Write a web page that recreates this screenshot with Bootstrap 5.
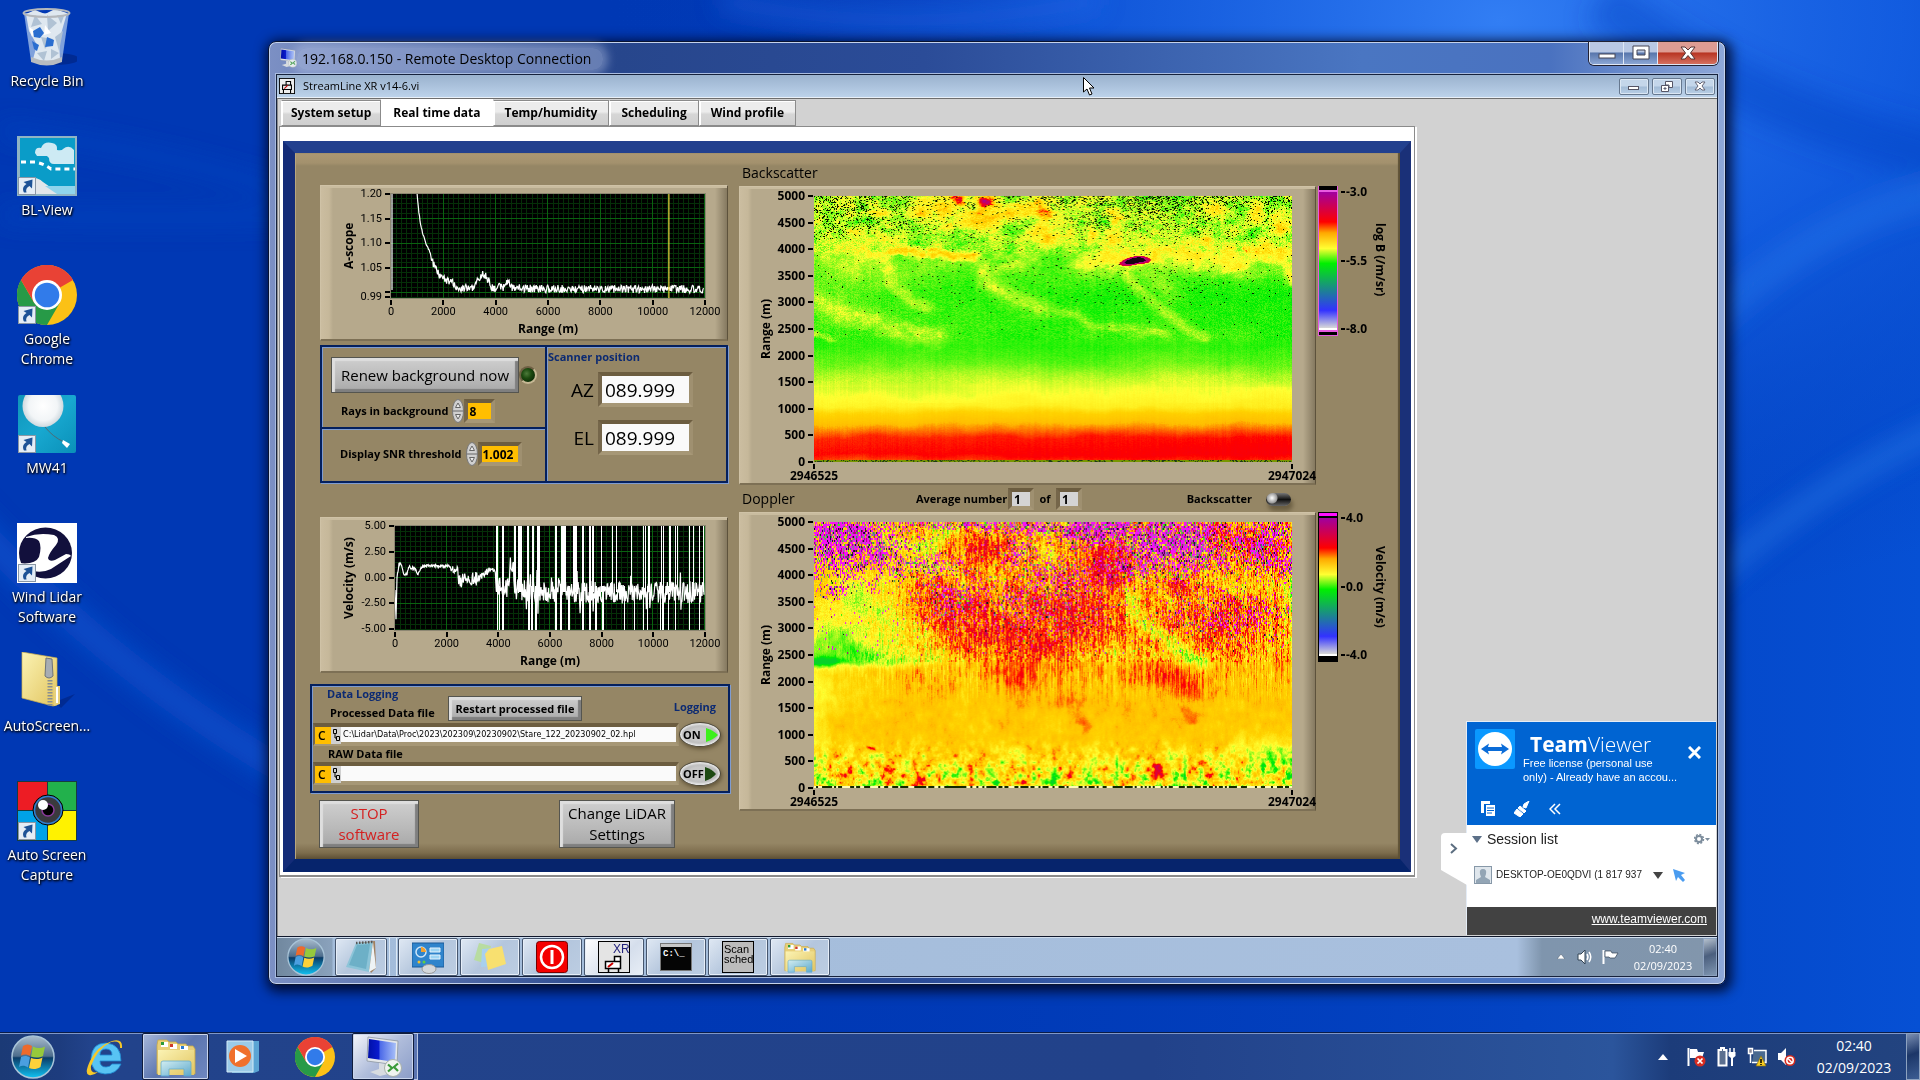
<!DOCTYPE html>
<html lang="en">
<head>
<meta charset="utf-8">
<meta name="viewport" content="width=device-width, initial-scale=1">
<title>192.168.0.150 - Remote Desktop Connection</title>
<link href="https://cdn.jsdelivr.net/npm/bootstrap@5.3.0/dist/css/bootstrap.min.css" rel="stylesheet">
<style>
  body { font-family: "Open Sans", "Noto Sans", sans-serif; font-size: 14px; line-height: 20px; color: #000; background: #0038b4; overflow: hidden; }
  svg { display: block; flex: none; }
  .desk { min-height: 0; }
  .wallpaper { position: absolute; inset: 0; width: 100%; height: 100vh; }

  /* desktop shortcuts */
  .shortcuts { position: relative; width: 94px; }
  .shortcut { height: 129px; padding-top: 7px; color: #fff; text-align: center; text-decoration: none; text-shadow: 1px 1px 2px #000, 0 1px 3px #000; white-space: nowrap; }
  .shortcut svg { margin: 0 auto 4px; }

  /* remote desktop window */
  .rdp { position: absolute; left: 268px; top: 41px; right: 194px; bottom: 47px; border: 1px solid #0a1430; border-radius: 8px; padding: 0 7px 7px;
    background: linear-gradient(90deg, #7c90c4 0, #27468c 24%, #2b4c98 45%, #4a76c2 75%, #4a72c0 88%, #8fa8d8 100%);
    box-shadow: inset 0 0 0 1px #c4d2ec, 2px 3px 12px 4px rgba(0,0,20,.75); }
  .rdp-title { height: 32px; padding-left: 3px; }
  .rdp-name { font-size: 14px; padding: 0 12px 0 5px; margin: 1px 0 0; font-weight: 400; line-height: 22px; border-radius: 10px; background: rgba(190,203,232,.4); box-shadow: 0 0 8px 5px rgba(190,203,232,.4); }
  .rdp-body { border: 1px solid #16223c; outline: 1px solid #a9bce0; background: #d2d2d2; min-height: 0; }
  .caption-btns { align-self: flex-start; border: 1px solid #dfe7f5; border-top: 0; border-radius: 0 0 5px 5px; overflow: hidden; height: 23px; box-shadow: 0 0 0 1px #223; }
  .caption-btns button { border: 0; border-right: 1px solid #dfe7f5; padding: 0; width: 34px; background: linear-gradient(#b9c8e4 0 45%, #5876ac 50%, #8ba6d4); }
  .caption-btns .btn-x { width: 59px; border-right: 0; background: linear-gradient(#dd9c93 0 45%, #b83422 50%, #d4705f); }
  .caption-btns svg, .mdi-btns svg { margin: auto; }

  .mdi-title { height: 23px; padding-left: 2px; background: linear-gradient(#9ab2ce, #bcd2ea); border-bottom: 1px solid #e9f0f8; font-size: 11px; }
  .mdi-btns { gap: 3px; padding-right: 2px; }
  .mdi-btns button { width: 30px; height: 17px; padding: 0; border: 1px solid #66788f; border-radius: 2px; background: linear-gradient(#c4d6ea 0 48%, #a2bbd6 52%, #b9cfe6); box-shadow: inset 0 0 0 1px #dbe7f4; }
  .mdi-area { border-top: 1px solid #6e6e6e; border-left: 1px solid #8c8c8c; padding: 0 0 0 1px; min-height: 0; }

  /* front panel tabs */
  .vi { margin-right: 302px; }
  .vi-tabs { border: 0; height: 27px; padding-left: 2px; flex-wrap: nowrap; align-items: flex-end; }
  .vi-tabs .nav-link { height: 26px; margin: 0; padding: 0 11px; border: 1px solid #8b8b8b; border-left-color: #fff; border-radius: 0; background: linear-gradient(#ececec 0 45%, #d6d6d6 55%, #cfcfcf); box-shadow: inset 1px 1px 0 #fff; color: #000; font-size: 12px; font-weight: 700; line-height: 24px; }
  .vi-tabs .tab-first { padding: 0 9px; }
  .vi-tabs .nav-link.active { height: 27px; background: #fff; border-color: #fff; line-height: 20px; }
  .vi-page { background: #fff; border: 1px solid #8b8b8b; border-bottom-width: 2px; padding: 14px 3px 3px 3px; box-shadow: 2px 1px 0 #fff; }
  .vi-blue { border-style: solid; border-width: 12px 11px 13px 12px; border-color: #22408e #1a3078 #06246c #142c78; background: #958665; }
  .vi-brown { height: 706px; padding: 0 0 0 15px; background: linear-gradient(#ab9873 0, #a3916d 10px, #958665 13px, #958665 690px, #7c6c4c 700px, #5c4e34 706px); box-shadow: inset -2px 0 1px #5e5136, inset 1px 0 0 #b8a67e; }
  .col-controls { width: 420px; flex: none; padding-top: 32px; }
  .col-maps { padding: 10px 0 0 9px; min-width: 0; }

  /* raised panels and text */
  .raised { background: linear-gradient(90deg, #cbbda0 0, #c6b89a 8px, #b6a98c 12px, #b6a98c calc(100% - 12px), #857960 100%); border: 1px solid #cfc2a6; border-right-color: #5d523c; border-bottom: 2px solid #7d7055; box-shadow: inset 0 2px 0 #c9bc9f; }
  .bold12 { font-size: 12px; line-height: 14px; font-weight: 700; white-space: nowrap; }
  .bold11 { font-size: 11px; line-height: 14px; font-weight: 700; white-space: nowrap; }
  .navy { color: #0c2a72; }
  .thin15 { font-size: 15px; line-height: 21px; }
  .head15 { font-size: 14px; line-height: 20px; }
  .steel { border: 1px solid #55554f; border-radius: 0; padding: 0; background: linear-gradient(#cfcfcf, #b9b9b9 60%, #a8a8a8); box-shadow: inset 3px 3px 1px #dedede, inset -3px -3px 1px #7f7f7f; color: #000; }
  .sunk { border-style: solid; border-width: 4px; border-color: #6c5d40 #9f9070 #a69776 #75664a; border-radius: 0; background: #fafafa; padding: 0; color: #000; }
  .gold { background: #ffbe00; font-size: 12px; font-weight: 700; line-height: 16px; height: 24px; padding-left: 1px; }
  .framed { border: 2px solid #04205e; box-shadow: inset 1px 1px 0 #7f9cd0, 1px 1px 0 #7f9cd0; }

  /* charts */
  .chart-sm { margin-left: 10px; width: 408px; height: 156px; padding: 8px 22px 0 20px; }
  .chart-map { height: 299px; padding: 9px 23px 0 18px; min-width: 0; }
  .v-up { writing-mode: vertical-rl; transform: rotate(180deg); text-align: center; width: 16px; line-height: 16px; }
  .v-down { writing-mode: vertical-rl; width: 16px; line-height: 16px; }
  .axis-y > span { display: flex; align-items: center; justify-content: flex-end; height: 0; }
  .axis-y > span::after { content: ""; width: 5px; height: 2px; margin: 0 1px 0 3px; background: #000; }
  .axis-y > i { flex: 1 1 0; }
  .axis-x { height: 20px; padding-top: 2px; }
  .axis-x > span { width: 0; display: flex; flex-direction: column; align-items: center; white-space: nowrap; line-height: 13px; }
  .axis-x > span::before { content: ""; width: 2px; height: 5px; background: #000; }
  .ax11 { font-family: Roboto, sans-serif; font-size: 11px; }
  .plot-sm { height: 104px; width: 100%; background: #000; outline: 1px solid #8d8672; }
  .plot-map { height: 266px; width: 100%; display: block; }
  .scale-bar { width: 20px; height: 150px; margin-left: 2px; }
  .scale-marks > span { line-height: 0; height: 0; display: flex; align-items: center; white-space: nowrap; }
  .scale-marks > span::before { content: ""; width: 4px; height: 2px; background: #000; margin-right: 1px; }
  .side { width: 84px; flex: none; }

  .led { width: 18px; height: 18px; border-radius: 50%; background: radial-gradient(circle at 40% 40%, #4c7a3a, #1c4a10 40%, #0f3008 70%); border: 2px solid #6e6044; border-right-color: #c6b894; border-bottom-color: #c6b894; }
  .oval { width: 42px; height: 25px; padding: 0 0 0 3px; border: 1px solid #4e4838; border-radius: 50%; background: radial-gradient(#c8c8c8 40%, #8e8e8e); box-shadow: inset 0 0 2px 2px #e6e6e6, 1px 2px 4px #5f5237; font-size: 11px; font-weight: 700; line-height: 20px; margin-right: 7px; }
  .pathbox { height: 23px; border-color: #6c5d40 #9f9070 #a69776 #75664a; border-style: solid; border-width: 4px 3px; background: #fafafa; }
  .pathbox input { border: 0; background: transparent; padding: 0 0 0 2px; font: 9px/15px "DejaVu Sans Condensed", "DejaVu Sans", sans-serif; color: #000; min-width: 0; }
  .drive { width: 16px; height: 17px; margin-left: -1px; background: #ffbe00; font-size: 12px; font-weight: 600; line-height: 17px; padding-left: 3px; }
  .browse { width: 10px; height: 17px; background: #d0d0d0; }
  .knob { appearance: none; width: 25px; height: 13px; margin: 0; border-radius: 7px; background: radial-gradient(circle at 6px 5px, #fff, #999 5px, transparent 6px), linear-gradient(#777, #111 50%, #666); box-shadow: 2px 5px 4px #6b5e42; }

  /* session widget */
  .tv { position: absolute; right: 9px; bottom: 49px; width: 250px; height: 214px; font-family: "Liberation Sans", Arial, sans-serif; color: #222; border-top: 1px solid #e4ecf6; border-left: 1px solid #e4ecf6; background: #fff; }
  .tv-head { height: 103px; background: #0064d2; color: #fff; }
  .tv-name { font: 300 21px/24px "Open Sans", sans-serif; }
  .tv-name b { font-weight: 700; }
  .tv-note { font-size: 11px; line-height: 14px; }
  .tv-foot { height: 28px; background: #424242; font-size: 12px; }
  .tv-handle { position: absolute; left: -26px; top: 111px; }

  /* taskbars */
  .bar-in { height: 40px; background: linear-gradient(90deg, #71889f 0, #8aa2bc 55px, #a3bcda 56px, #a9c0de calc(100% - 200px), #7f95ad calc(100% - 175px), #8296ac 100%); border-top: 1px solid #10182c; box-shadow: inset 0 1px 0 #d0deee; }
  .tile { border: 1px solid #46566e; border-radius: 2px; padding: 0; background: linear-gradient(135deg, #dfe8f3, #b4c6dd 50%, #bccde2); box-shadow: inset 0 0 0 1px #e6eef8; }
  .bar-in .tile { width: 60px; height: 38px; margin-right: 2px; }
  .bar-in .tile svg, .bar-out .tile svg, .bare svg { margin: auto; }
  .tile.lit { background: linear-gradient(135deg, #fff, #d5deec 60%, #e8eef6); }
  .bar-out { position: relative; height: 48px; color: #fff; background: linear-gradient(90deg, #1b3a76 0, #1d3c7e 60px, #22438b 90px, #22428a 60%, #2b559c 84%, #1c3c7a 87%, #234480 100%); border-top: 1px solid #0a1c48; box-shadow: inset 0 1px 0 #7f97c8; }
  .bar-out .tile { width: 67px; height: 47px; border-color: #101c3c; background: linear-gradient(135deg, #a8b8da, #5c76b0 50%, #6f88c0); box-shadow: inset 0 0 0 1px #c9d5ec; }
  .bar-out .tile.lit { width: 62px; background: linear-gradient(135deg, #f4f6fb, #b0bddb 50%, #8a9cc8); }
  .bare { border: 0; padding: 0; background: none; }
  .clock-in { font-size: 11px; line-height: 17px; color: #fff; text-align: center; }
  .clock-out { font-size: 14px; line-height: 22px; text-align: center; padding-left: 5px; }
  .peek { width: 14px; border: 1px solid #8da2c0; background: linear-gradient(160deg, rgba(255,255,255,.4), rgba(20,40,80,.5) 45%, rgba(120,150,190,.3)); }
  .pointer { position: absolute; left: 1083px; top: 77px; }
</style>
<script src="https://cdn.jsdelivr.net/npm/bootstrap@5.3.0/dist/js/bootstrap.bundle.min.js"></script>
</head>
<body class="d-flex flex-column vh-100">

<!-- shared icon shapes -->
<svg width="0" height="0" class="position-absolute" aria-hidden="true">
  <defs>
    <linearGradient id="gFold" x1="0" y1="0" x2="1" y2="1"><stop offset="0" stop-color="#fbf3b4"/><stop offset="1" stop-color="#e2c560"/></linearGradient>
    <linearGradient id="gMon" x1="0" y1="0" x2="1" y2="0"><stop offset="0" stop-color="#0010a8"/><stop offset=".4" stop-color="#0a1cd0"/><stop offset=".42" stop-color="#4a68e8"/><stop offset="1" stop-color="#a8c0f8"/></linearGradient>
    <linearGradient id="gOrb" x1="0" y1="0" x2="0" y2="1"><stop offset="0" stop-color="#a9bccd"/><stop offset=".48" stop-color="#4d6d8c"/><stop offset=".52" stop-color="#0b3c68"/><stop offset="1" stop-color="#10c4f4"/></linearGradient>
    <radialGradient id="gBall"><stop offset="0" stop-color="#fff"/><stop offset=".7" stop-color="#f2f5f7"/><stop offset="1" stop-color="#cfd9df"/></radialGradient>
    <linearGradient id="gSky" x1="0" y1="0" x2="1" y2="1"><stop offset="0" stop-color="#0f94b8"/><stop offset=".5" stop-color="#18a8d0"/><stop offset="1" stop-color="#0a90b8"/></linearGradient>
    <linearGradient id="gGlass" x1="0" y1="0" x2="1" y2="1"><stop offset="0" stop-color="#cfeefa"/><stop offset="1" stop-color="#4ea6d8"/></linearGradient>
  </defs>
  <symbol id="i-arrow" viewBox="0 0 18 18"><rect x=".5" y=".5" width="17" height="17" fill="#e4edf6" stroke="#8a97a5"/><path d="M6 15.500C4.500 12.500 4.500 9.500 8.500 7L5.500 5 14.500 2.500 14 11.500 11.500 9C8.500 10.500 7.500 12.500 8.500 15.500Z" fill="#1d5296"/></symbol>
  <symbol id="i-chrome" viewBox="0 0 60 60"><circle cx="30" cy="30" r="30" fill="#fbc116"/><path d="M30 30 4 15A30 30 0 0 1 56 15Z" fill="#e94235"/><path d="M4 15A30 30 0 0 0 30 60L43 37.500H17Z" fill="#279a47"/><path d="M4 15 17 37.500 30 30 30 15Z" fill="#e94235"/><circle cx="30" cy="30" r="15" fill="#fff"/><circle cx="30" cy="30" r="12.300" fill="#317bea"/></symbol>
  <symbol id="i-orb" viewBox="0 0 44 44"><circle cx="22" cy="22" r="21" fill="url(#gOrb)" stroke="#a8c4d8" stroke-width="1.500"/><path d="M12 11c3-2 6-2 9 0l-2 10c-3-2-6-2-9-.5Z" fill="#ee6a2c"/><path d="M22 11.500c4 2 8 2 12 0l-2 9.500c-4 2-8 2-12 .5Z" fill="#96c93c"/><path d="M10 22c3-1.500 6-1.500 9 .5l-2 10c-3-2-6-2.500-9-.5Z" fill="#4a9fe0"/><path d="M20 23c4 1.500 8 1.500 11.500-.5l-2 9.500c-4 2.500-8 2.500-11.500 1Z" fill="#fdd13a"/></symbol>
  <symbol id="i-explorer" viewBox="0 0 40 40"><path d="M1 8 2 3H11L13 5H20L22 7H30L31 9H37L39 12V37H1Z" fill="#e8cf78" stroke="#c8a948" stroke-width=".8"/><path d="M5 5h7v5H5zM14 7h7v5h-7zM24 9h8v5h-8z" fill="#fff"/><path d="M5 5h3v3H5z" fill="#2a9a3a"/><path d="M14 7h3v3h-3z" fill="#d03a2a"/><path d="M25 9h3v3h-3z" fill="#2a7ad0"/><path d="M2 13H38V38H2Z" fill="url(#gFold)"/><path d="M5 26Q5 24 7 24H33Q35 24 35 26V39H28V32H13V39H5Z" fill="url(#gGlass)" stroke="#5aa8d0" stroke-width=".8" opacity=".9"/></symbol>
  <symbol id="i-monitor" viewBox="0 0 38 42"><path d="M4 1 34 5 33 29 3 25Z" fill="#e4e7ea" stroke="#8c95a0" stroke-width=".8"/><path d="M5 3 32 7 31 26 4 22Z" fill="url(#gMon)"/><path d="M15 27 21 28V33L28 37 16 40 6 36 15 33Z" fill="#d8dce0"/><circle cx="29" cy="32" r="8.500" fill="#f0f3f0" stroke="#a8b0a8"/><path d="M24 28.500 28 32 24 35.500M34 27.500 30 31 34 35" fill="none" stroke="#3a9a38" stroke-width="2.200"/></symbol>
  <symbol id="i-cannon" viewBox="0 0 18 18"><rect x=".5" y=".5" width="17" height="17" fill="#eee" stroke="#000"/><path d="M4 8H14V13H4ZM8 4H13V8H8ZM5 13V17M13 13V17" fill="none" stroke="#000" stroke-width="1.200"/><path d="M6 12 10 8" stroke="#b00" stroke-width="1.200"/></symbol>
</svg>

<main class="desk flex-grow-1 position-relative">
  <svg class="wallpaper" viewBox="0 0 1920 1080" preserveAspectRatio="none" aria-hidden="true">
    <defs>
      <radialGradient id="wTop" gradientUnits="userSpaceOnUse" cx="0" cy="0" r="1" gradientTransform="translate(1500 20) scale(900 600)"><stop offset="0" stop-color="#327ef4"/><stop offset=".45" stop-color="#1660e4" stop-opacity=".75"/><stop offset="1" stop-color="#0038b4" stop-opacity="0"/></radialGradient>
      <linearGradient id="wRight" x1="0" x2="1" y1="0" y2="0"><stop offset=".3" stop-color="#0038b4" stop-opacity="0"/><stop offset="1" stop-color="#0650d4"/></linearGradient>
      <filter id="soft"><feGaussianBlur stdDeviation="12"/></filter>
    </defs>
    <rect width="1920" height="1080" fill="#0038b4"/>
    <rect width="1920" height="1080" fill="url(#wRight)"/>
    <rect width="1920" height="1080" fill="url(#wTop)"/>
    <g fill="none" filter="url(#soft)">
      <path d="M-40 510Q120 680 300 780" stroke="#0a54d0" stroke-width="28" opacity=".7"/>
      <path d="M0 130Q160 150 300 195M0 215Q150 220 300 215" stroke="#0848c4" stroke-width="12" opacity=".6"/>
      <path d="M720 0Q900 40 1100 0" stroke="#2c74f0" stroke-width="18" opacity=".4"/>
      <path d="M1700 590Q1820 480 1960 420" stroke="#3f93f4" stroke-width="18" opacity=".4"/>
      <path d="M1600 0Q1760 120 1960 160" stroke="#0040c0" stroke-width="50" opacity=".4"/>
      <path d="M1690 340Q1820 210 1960 190" stroke="#3c8af6" stroke-width="30" opacity=".3"/>
    </g>
  </svg>

  <nav class="shortcuts d-flex flex-column" aria-label="Desktop">
    <a href="#" class="shortcut"><svg width="60" height="60" viewBox="0 0 60 60"><ellipse cx="38" cy="52" rx="24" ry="6" fill="#001c70" opacity=".5"/><path d="M7 6 14 54Q30 60 45 54L52 6Z" fill="#a9c4ea" opacity=".75"/><path d="M9 7 18 3 28 7 38 2 50 6 46 20 42 34 43 52Q30 57 16 52L20 38 12 24Z" fill="#dfe8f0"/><path d="M18 8 25 17 14 20ZM30 8 40 16 31 24ZM24 30 36 32 28 42ZM38 30 46 24 42 44ZM20 46 30 44 27 54ZM40 8 47 9 44 17ZM34 42 42 46 34 52Z" fill="#b0c2d4"/><path d="M12 20 18 24 15 30ZM28 18 34 26 27 28Z" fill="#fff"/><path d="M16 24 23 20 27 26 23 31 17 30ZM30 30 37 33 36 39 28 40ZM15 34 22 38 20 44 17 42Z" fill="#2a6ed0"/><path d="M14 50Q30 57 45 50V55Q30 62 14 55Z" fill="#b8bcc0"/><ellipse cx="29.500" cy="6" rx="23" ry="4" fill="none" stroke="#b4b8bc" stroke-width="2"/></svg>Recycle Bin</a>
    <a href="#" class="shortcut"><svg width="60" height="60" viewBox="0 0 60 60"><rect width="60" height="60" fill="#8fb4c4"/><rect x="3" y="2" width="55" height="56" fill="#0a9cc8"/><path d="M18 17Q18 11 24 12 27 5 35 7 41 8 40 14 45 15 46 13 52 8 57 14V28H37Q32 28 32 22L30 20H20Z" fill="#cdeaf4"/><path d="M4 26H18Q28 28 34 33H58" fill="none" stroke="#fff" stroke-width="3" stroke-dasharray="5 4"/><path d="M3 44Q18 38 26 46L36 53 58 58H3Z" fill="#e2e6ea"/><path d="M28 50H58V58H40Z" fill="#8fd4ec"/><use href="#i-arrow" x="1" y="41" width="18" height="18"/></svg>BL-View</a>
    <a href="#" class="shortcut"><svg width="60" height="60" viewBox="0 0 60 60"><use href="#i-chrome" width="60" height="60"/><use href="#i-arrow" x="1" y="41" width="18" height="18"/></svg>Google<br>Chrome</a>
    <a href="#" class="shortcut"><svg width="60" height="60" viewBox="0 0 60 60"><rect x="1" y="1" width="58" height="58" rx="2" fill="url(#gSky)"/><clipPath id="cBal"><rect x="1" y="1" width="58" height="58"/></clipPath><ellipse cx="26" cy="12" rx="20.500" ry="21" fill="url(#gBall)" clip-path="url(#cBal)"/><path d="M28 33Q36 43 47 48" fill="none" stroke="#4c6c78"/><path d="M46 46 53 50 50 54 45 49Z" fill="#fff"/><use href="#i-arrow" x="1" y="41" width="18" height="18"/></svg>MW41</a>
    <a href="#" class="shortcut"><svg width="60" height="60" viewBox="0 0 60 60"><rect width="60" height="60" fill="#fff"/><ellipse cx="28.500" cy="30" rx="26.500" ry="25.500" fill="#12103c"/><path d="M9 14Q22 9 37 12 44 15 39 22 32 30 31 35 32 39 38 37L49 31Q53 31 54 33 40 42 34 46 24 51 12 47L2 40Q18 42 22 34 25 24 22 18 18 14 9 15Z" fill="#fff"/><use href="#i-arrow" x="1" y="41" width="18" height="18"/></svg>Wind Lidar<br>Software</a>
    <a href="#" class="shortcut"><svg width="60" height="60" viewBox="0 0 60 60"><path d="M38 50 58 42 44 56Z" fill="#001c70" opacity=".5"/><path d="M5 0 40 6V53L36 54 5 46Z" fill="url(#gFold)" stroke="#d0b24c" stroke-width=".7"/><path d="M37 34 43 34V52L37 54Z" fill="#e6d07c"/><path d="M40 35V51" stroke="#fff" stroke-width="2"/><path d="M33 28V54" stroke="#8a8f90" stroke-width="5" stroke-dasharray="1.500 1.500"/><path d="M29 6 35 7 36 24Q32 28 28 24Z" fill="#a7adb3" stroke="#6d747a"/></svg>AutoScreen...</a>
    <a href="#" class="shortcut"><svg width="60" height="60" viewBox="0 0 60 60"><rect width="60" height="60" fill="#173c40"/><path d="M1 1h29v28H1z" fill="#ed1c24"/><path d="M31 1h28v28H31z" fill="#22b14c"/><path d="M1 30h29v29H1z" fill="#00a2e8"/><path d="M31 30h28v29H31z" fill="#fff200"/><circle cx="31" cy="29" r="15" fill="#3a3a3e" stroke="#000"/><circle cx="31" cy="29" r="13.500" fill="none" stroke="#2f7fd0" stroke-width="1.500"/><circle cx="31" cy="29" r="6" fill="#000" stroke="#8a3a9a" stroke-width="1.500"/><circle cx="26" cy="24" r="5" fill="#fff"/><use href="#i-arrow" x="1" y="41" width="18" height="18"/></svg>Auto Screen<br>Capture</a>
  </nav>

  <section class="rdp d-flex flex-column" aria-label="Remote Desktop Connection">
    <header class="rdp-title d-flex align-items-center">
      <svg width="18" height="20"><use href="#i-monitor" width="18" height="20"/></svg>
      <h1 class="rdp-name">192.168.0.150 - Remote Desktop Connection</h1>
      <div class="caption-btns d-flex ms-auto">
        <button type="button" aria-label="Minimise"><svg width="18" height="16"><rect x="1" y="9" width="16" height="4" fill="#fff" stroke="#445"/></svg></button>
        <button type="button" aria-label="Maximise"><svg width="18" height="16"><path d="M1 1H17V14H1ZM5 5V10H13V5Z" fill="#fff" fill-rule="evenodd" stroke="#445"/></svg></button>
        <button type="button" class="btn-x" aria-label="Close"><svg width="16" height="14"><path d="M1 1H5L8 4 11 1H15L10.500 7 15 13H11L8 9.500 5 13H1L5.500 7Z" fill="#fff" stroke="#533"/></svg></button>
      </div>
    </header>
    <div class="rdp-body flex-grow-1 d-flex flex-column">
      <div class="mdi-title d-flex align-items-center">
        <svg width="16" height="16"><use href="#i-cannon" width="16" height="16"/></svg>
        <span class="ms-2">StreamLine XR v14-6.vi</span>
        <div class="mdi-btns ms-auto d-flex">
          <button type="button" aria-label="Minimise window"><svg width="12" height="9"><rect x=".5" y="4.500" width="10" height="3" fill="#fff" stroke="#556"/></svg></button>
          <button type="button" aria-label="Restore window"><svg width="12" height="11"><path d="M4.500.5H11.500V6.500H8V4H4.500Z" fill="#fff" stroke="#556"/><path d="M.5 4.500H7.500V10.500H.5ZM3 7V8H5V7Z" fill="#fff" stroke="#556"/></svg></button>
          <button type="button" aria-label="Close window"><svg width="12" height="10"><path d="M1 1H4L6 3 8 1H11L8 5 11 9H8L6 7 4 9H1L4 5Z" fill="#fff" stroke="#667"/></svg></button>
        </div>
      </div>

      <div class="mdi-area flex-grow-1">
        <div class="vi">
          <ul class="nav nav-tabs vi-tabs" role="tablist">
            <li class="nav-item"><button class="nav-link tab-first" type="button" role="tab">System setup</button></li>
            <li class="nav-item"><button class="nav-link active" type="button" role="tab" aria-selected="true">Real time data</button></li>
            <li class="nav-item"><button class="nav-link" type="button" role="tab">Temp/humidity</button></li>
            <li class="nav-item"><button class="nav-link" type="button" role="tab">Scheduling</button></li>
            <li class="nav-item"><button class="nav-link" type="button" role="tab">Wind profile</button></li>
          </ul>
          <div class="vi-page"><div class="vi-blue"><div class="vi-brown d-flex">

            <div class="col-controls">
              <div class="raised chart-sm d-flex">
                <div class="v-up bold12" style="height:104px">A-scope</div>
                <div class="axis-y ax11 d-flex flex-column" style="width:34px;height:103px">
                  <span>1.20</span><i style="flex-grow:5"></i><span>1.15</span><i style="flex-grow:5"></i><span>1.10</span><i style="flex-grow:5"></i><span>1.05</span><i style="flex-grow:5"></i><span></span><i style="flex-grow:1"></i><span>0.99</span>
                </div>
                <div class="flex-grow-1">
                  <svg id="ascope" class="plot-sm" viewBox="0 0 313 104" preserveAspectRatio="none" role="img" aria-label="A-scope trace"></svg>
                  <div class="axis-x ax11 d-flex justify-content-between"><span>0</span><span>2000</span><span>4000</span><span>6000</span><span>8000</span><span>10000</span><span>12000</span></div>
                  <div class="bold12 text-center mt-1">Range (m)</div>
                </div>
              </div>

              <div class="framed d-flex" style="margin:4px 0 0 10px;height:138px;width:408px">
                <div class="d-flex flex-column" style="width:223px">
                  <div style="height:82px;border-bottom:2px solid #04205e;box-shadow:0 1px 0 #7f9cd0;padding:10px 0 0 9px">
                    <div class="d-flex align-items-center">
                      <button type="button" class="steel thin15" style="width:188px;height:36px">Renew background now</button>
                      <div class="led"></div>
                    </div>
                    <div class="d-flex align-items-center bold11" style="padding:6px 0 0 10px">
                      <label for="rays">Rays in background</label>
                      <svg class="ms-1" width="12" height="24" viewBox="0 0 12 24"><ellipse cx="6" cy="12" rx="5.500" ry="11.500" fill="#d0d0d0" stroke="#777"/><path d="M1 12H11M3.500 8.500 6 4 8.500 8.500ZM3.500 15.500 6 20 8.500 15.500Z" fill="#eee" stroke="#666"/></svg>
                      <input id="rays" class="sunk gold" style="width:31px" value="8">
                    </div>
                  </div>
                  <div class="d-flex align-items-center bold11" style="padding:13px 0 0 18px">
                    <label for="snr">Display SNR threshold</label>
                    <svg class="ms-1" width="12" height="24" viewBox="0 0 12 24"><ellipse cx="6" cy="12" rx="5.500" ry="11.500" fill="#d0d0d0" stroke="#777"/><path d="M1 12H11M3.500 8.500 6 4 8.500 8.500ZM3.500 15.500 6 20 8.500 15.500Z" fill="#eee" stroke="#666"/></svg>
                    <input id="snr" class="sunk gold" style="width:44px" value="1.002">
                  </div>
                </div>
                <div class="flex-grow-1" style="border-left:2px solid #04205e;box-shadow:inset 1px 0 0 #7f9cd0">
                  <div class="bold11 navy" style="padding:3px 0 0 1px">Scanner position</div>
                  <div class="d-flex align-items-center" style="font-size:19px;margin-top:8px"><label for="az" class="text-end" style="width:47px">AZ</label><input id="az" class="sunk ms-1" style="width:95px;height:35px;padding-left:3px" value="089.999"></div>
                  <div class="d-flex align-items-center" style="font-size:19px;margin-top:13px"><label for="el" class="text-end" style="width:47px">EL</label><input id="el" class="sunk ms-1" style="width:95px;height:35px;padding-left:3px" value="089.999"></div>
                </div>
              </div>

              <div class="raised chart-sm d-flex" style="margin-top:34px">
                <div class="v-up bold12" style="height:104px">Velocity (m/s)</div>
                <div class="axis-y ax11 d-flex flex-column" style="width:38px;height:103px">
                  <span>5.00</span><i></i><span>2.50</span><i></i><span>0.00</span><i></i><span>-2.50</span><i></i><span>-5.00</span>
                </div>
                <div class="flex-grow-1">
                  <svg id="velo" class="plot-sm" viewBox="0 0 309 104" preserveAspectRatio="none" role="img" aria-label="Velocity trace"></svg>
                  <div class="axis-x ax11 d-flex justify-content-between"><span>0</span><span>2000</span><span>4000</span><span>6000</span><span>8000</span><span>10000</span><span>12000</span></div>
                  <div class="bold12 text-center mt-1">Range (m)</div>
                </div>
              </div>

              <div class="framed" style="margin-top:11px;height:109px;padding-left:1px">
                <div class="d-flex bold11" style="height:36px">
                  <div style="width:135px;padding-left:14px"><div class="navy" style="padding-top:1px">Data Logging</div><div style="padding:5px 0 0 3px">Processed Data file</div></div>
                  <button type="button" class="steel bold11" style="width:134px;height:25px;margin-top:10px">Restart processed file</button>
                  <div class="navy ms-auto" style="padding:14px 12px 0 0">Logging</div>
                </div>
                <div class="d-flex align-items-center">
                  <div class="pathbox d-flex flex-grow-1"><span class="drive">C</span><span class="browse"><svg width="9" height="15"><path d="M2.500 2.500H5.500V6.500H2.500ZM5.500 9.500H8.500V13.500H5.500ZM4 6V11H5" fill="none" stroke="#000"/></svg></span><input class="flex-grow-1" aria-label="Processed data file path" value="C:\Lidar\Data\Proc\2023\202309\20230902\Stare_122_20230902_02.hpl"></div>
                  <button type="button" class="oval d-flex align-items-center">ON<svg width="14" height="14" class="ms-1"><path d="M1 0Q8 2 13 7 8 12 1 14Z" fill="#3cf01c"/></svg></button>
                </div>
                <div class="bold11" style="padding:0 0 0 15px">RAW Data file</div>
                <div class="d-flex align-items-center">
                  <div class="pathbox d-flex flex-grow-1"><span class="drive">C</span><span class="browse"><svg width="9" height="15"><path d="M2.500 2.500H5.500V6.500H2.500ZM5.500 9.500H8.500V13.500H5.500ZM4 6V11H5" fill="none" stroke="#000"/></svg></span><input class="flex-grow-1" aria-label="Raw data file path" value=""></div>
                  <button type="button" class="oval d-flex align-items-center">OFF<svg width="12" height="14"><path d="M1 0Q8 2 12 7 8 12 1 14Z" fill="#1d4a12"/></svg></button>
                </div>
              </div>

              <div class="d-flex" style="margin-top:7px;padding-left:9px">
                <button type="button" class="steel thin15" style="width:100px;height:48px;color:#d42020">STOP<br>software</button>
                <button type="button" class="steel thin15" style="width:116px;height:48px;margin-left:140px">Change LiDAR<br>Settings</button>
              </div>
            </div>

            <div class="col-maps flex-grow-1">
              <div class="head15" style="padding-left:3px;height:23px">Backscatter</div>
              <div class="d-flex bold12">
                <div class="raised chart-map d-flex flex-grow-1">
                  <div class="v-up" style="height:266px">Range (m)</div>
                  <div class="axis-y d-flex flex-column" style="width:40px;height:266px"><span>5000</span><i></i><span>4500</span><i></i><span>4000</span><i></i><span>3500</span><i></i><span>3000</span><i></i><span>2500</span><i></i><span>2000</span><i></i><span>1500</span><i></i><span>1000</span><i></i><span>500</span><i></i><span>0</span></div>
                  <div class="flex-grow-1"><canvas id="mapB" class="plot-map" width="477" height="266"></canvas><div class="axis-x d-flex justify-content-between"><span>2946525</span><span>2947024</span></div></div>
                </div>
                <div class="side d-flex">
                  <svg class="scale-bar" viewBox="0 0 20 150" preserveAspectRatio="none"><defs><linearGradient id="gScale" x1="0" x2="0" y1="0" y2="1"><stop offset="0" stop-color="#a000a0"/><stop offset=".22" stop-color="#ff0000"/><stop offset=".3" stop-color="#ffa800"/><stop offset=".415" stop-color="#ffff32"/><stop offset=".525" stop-color="#00f000"/><stop offset=".87" stop-color="#3232ff"/><stop offset="1" stop-color="#d8d8d8"/></linearGradient></defs><rect width="20" height="150" fill="#e85ae0"/><rect x="1" y="0" width="18" height="4" fill="#000"/><rect x="1" y="6" width="18" height="136" fill="url(#gScale)"/><rect x="1" y="142" width="18" height="2" fill="#fff"/><rect x="1" y="146" width="18" height="3" fill="#000"/></svg>
                  <div class="scale-marks d-flex flex-column justify-content-between" style="padding-left:3px;margin:6px 0 156px"><span>-3.0</span><span>-5.5</span><span>-8.0</span></div>
                  <div class="v-down" style="margin:37px 0 0 5px">log B (/m/sr)</div>
                </div>
              </div>
              <div class="d-flex align-items-center bold11" style="height:27px;padding:1px 0 0 3px">
                <span class="head15 fw-normal" style="width:174px">Doppler</span>
                <label for="avgA" style="width:92px">Average number</label>
                <input id="avgA" class="sunk bold12" style="width:26px;height:22px;background:#d4d4d4;padding-left:2px" value="1">
                <label for="avgB" style="width:22px;text-align:center">of</label>
                <input id="avgB" class="sunk bold12" style="width:26px;height:22px;background:#d4d4d4;padding-left:2px" value="1">
                <label for="which" class="ms-auto" style="padding-right:14px">Backscatter</label>
                <input id="which" type="checkbox" role="switch" class="knob" style="margin-right:109px">
              </div>
              <div class="d-flex bold12">
                <div class="raised chart-map d-flex flex-grow-1">
                  <div class="v-up" style="height:266px">Range (m)</div>
                  <div class="axis-y d-flex flex-column" style="width:40px;height:266px"><span>5000</span><i></i><span>4500</span><i></i><span>4000</span><i></i><span>3500</span><i></i><span>3000</span><i></i><span>2500</span><i></i><span>2000</span><i></i><span>1500</span><i></i><span>1000</span><i></i><span>500</span><i></i><span>0</span></div>
                  <div class="flex-grow-1"><canvas id="mapD" class="plot-map" width="477" height="266"></canvas><div class="axis-x d-flex justify-content-between"><span>2946525</span><span>2947024</span></div></div>
                </div>
                <div class="side d-flex">
                  <svg class="scale-bar" viewBox="0 0 20 150" preserveAspectRatio="none"><rect width="20" height="150" fill="#000"/><rect x="1" y="1" width="18" height="3" fill="#ff10ff"/><rect x="1" y="6" width="18" height="136" fill="url(#gScale)"/><rect x="1" y="142" width="18" height="2" fill="#fff"/></svg>
                  <div class="scale-marks d-flex flex-column justify-content-between" style="padding-left:3px;margin:6px 0 156px"><span>4.0</span><span>0.0</span><span>-4.0</span></div>
                  <div class="v-down" style="margin:34px 0 0 5px">Velocity (m/s)</div>
                </div>
              </div>
            </div>

          </div></div></div>
        </div>
      </div>

      <div class="bar-in d-flex align-items-center">
        <button type="button" class="bare" style="width:58px" aria-label="Start"><svg width="38" height="38"><use href="#i-orb" width="38" height="38"/></svg></button>
        <button type="button" class="tile" style="width:52px" aria-label="Notepad"><svg width="32" height="34" viewBox="0 0 32 34"><path d="M12 3 30 1 31 28 26 33Z" fill="#a08060"/><path d="M11 3 28 2 24 32 1 27Z" fill="#8cc4d8"/><path d="M12 5 25 4 21 29 4 25Z" fill="#5fa8c0" opacity=".7"/><path d="M11 3 28 2" stroke="#555" stroke-width="2.500" stroke-dasharray="1.500 1.500"/><path d="M28 2 31 28 24 32Z" fill="#eef3f5"/></svg></button>
        <div style="width:8px;height:38px;border:solid #dce8f4;border-width:0 1px;margin-right:1px"></div>
        <button type="button" class="tile" aria-label="Control panel"><svg width="32" height="34" viewBox="0 0 32 34"><rect y="3" width="32" height="24" fill="#2f84cc" stroke="#1c5a98"/><circle cx="9" cy="12" r="5" fill="none" stroke="#cfe6f8" stroke-width="1.500"/><path d="M9 12V7A5 5 0 0 1 14 12Z" fill="#f0a030"/><path d="M18 8H28V12H18ZM18 15H28V19H18Z" fill="#9cd4f4" stroke="#e8f4fc"/><circle cx="7" cy="22" r="1.500" fill="#f0c030"/><circle cx="12" cy="22" r="1.500" fill="#60d040"/><ellipse cx="17" cy="29" rx="7" ry="4.500" fill="#d4d8dc" stroke="#999"/></svg></button>
        <button type="button" class="tile" aria-label="Sticky notes"><svg width="34" height="30" viewBox="0 0 34 30"><path d="M6 1 18 4 14 22 1 18Z" fill="#b8dca0"/><path d="M9 7 22 6 24 24 8 25Z" fill="#a8d0ee"/><path d="M16 7 29 4 33 22 15 28 12 12Z" fill="#f8e070"/></svg></button>
        <button type="button" class="tile" aria-label="Power"><svg width="32" height="32"><rect x=".5" y=".5" width="31" height="31" rx="3" fill="#f40000" stroke="#700"/><circle cx="16" cy="16" r="11" fill="none" stroke="#fff" stroke-width="2.500"/><path d="M16 9V23" stroke="#fff" stroke-width="3"/></svg></button>
        <button type="button" class="tile lit" aria-label="StreamLine XR"><svg width="32" height="32"><rect x=".5" y=".5" width="31" height="31" fill="#e4e4e4" stroke="#000"/><text x="15" y="12" font-family="Liberation Sans" font-size="12" fill="#22227c">XR</text><path d="M7.500 20.500H22.500V27.500H7.500ZM16.500 15.500H22.500V20.500H16.500ZM10.500 27.500V32M20.500 27.500V32" fill="#fff" stroke="#000" stroke-width="1.500"/><path d="M10 26 15 22" stroke="#c00" stroke-width="2"/></svg></button>
        <button type="button" class="tile" aria-label="Command prompt"><svg width="32" height="28"><rect x=".5" y=".5" width="31" height="27" fill="#050505" stroke="#777"/><rect x="1" y="1" width="30" height="3" fill="#c8c8c8"/><text x="3" y="13" font-family="Liberation Mono" font-size="9" font-weight="700" fill="#fff">C:\_</text></svg></button>
        <button type="button" class="tile" aria-label="Scan scheduler"><svg width="32" height="32"><rect x=".5" y=".5" width="31" height="31" fill="#bcbcbc" stroke="#000"/><text x="2" y="12" font-family="Liberation Sans" font-size="11">Scan</text><text x="2" y="22" font-family="Liberation Sans" font-size="11">sched</text></svg></button>
        <button type="button" class="tile" aria-label="Explorer"><svg width="34" height="32"><use href="#i-explorer" width="34" height="32"/></svg></button>
        <div class="d-flex align-items-center ms-auto">
          <svg width="8" height="5"><path d="M0 5 4 0 8 5Z" fill="#fff" stroke="#456" stroke-width=".5"/></svg>
          <svg style="margin-left:12px" width="17" height="16"><path d="M1 5H4L8 1V15L4 11H1Z" fill="#fff" stroke="#345"/><path d="M10 5Q12 8 10 11M12 3Q15.500 8 12 13" fill="none" stroke="#fff" stroke-width="1.500"/></svg>
          <svg class="ms-2" width="17" height="16"><path d="M1.500 1V15" stroke="#fff" stroke-width="2"/><path d="M3 2H9L10 4H16L13 9H8L7 8H3Z" fill="#fff" stroke="#345" stroke-width=".7"/></svg>
          <div class="clock-in" style="width:80px;margin-left:4px">02:40<br>02/09/2023</div>
          <div class="peek align-self-stretch" style="height:38px"></div>
        </div>
      </div>
    </div>

    <aside class="tv" aria-label="TeamViewer">
      <div class="tv-handle"><svg width="26" height="52"><path d="M26 0H4Q0 0 0 4V37L26 52Z" fill="#fff"/><path d="M10 11 15 15.500 10 20" fill="none" stroke="#5c6e80" stroke-width="2"/></svg></div>
      <div class="tv-head">
        <div class="d-flex" style="padding:7px 0 0 8px;height:72px">
          <svg width="40" height="40"><rect width="40" height="40" rx="2" fill="#0a98ff"/><circle cx="20" cy="20" r="17" fill="#fff"/><path d="M6 20 14 14.500 13 18H27L26 14.500 34 20 26 25.500 27 22H13L14 25.500Z" fill="#0a6cd8"/></svg>
          <div style="padding-left:8px"><div class="tv-name" style="padding:3px 0 0 7px"><b>Team</b>Viewer</div><div class="tv-note text-nowrap">Free license (personal use<br>only) - Already have an accou...</div></div>
          <button type="button" class="bare position-absolute" style="right:15px;top:24px" aria-label="Close panel"><svg width="13" height="13"><path d="M1 1 12 12M12 1 1 12" stroke="#fff" stroke-width="3"/></svg></button>
        </div>
        <div class="d-flex align-items-center" style="padding:7px 0 0 14px">
          <svg width="15" height="16"><path d="M0 0H9V3H3V12H0Z" fill="#fff"/><rect x="4.500" y="3.500" width="10" height="12" fill="#fff" stroke="#0064d2"/><path d="M6 7H13M6 9.500H13M6 12H11" stroke="#0064d2"/></svg>
          <svg style="margin-left:18px" width="16" height="16"><path d="M15 0 10 3 9 6 12 7Z M6 5 12 10 10 12 4 7ZM3 8 9 13 6 16 0 12Z" fill="#fff" stroke="#fff"/></svg>
          <svg style="margin-left:19px" width="12" height="12"><path d="M6 1 1 6 6 11M11 1 6 6 11 11" fill="none" stroke="#fff" stroke-width="1.500"/></svg>
        </div>
      </div>
      <div style="height:82px">
        <div class="d-flex align-items-center" style="padding:4px 6px 0 5px;font-size:14px"><svg width="10" height="7"><path d="M0 0H10L5 7Z" fill="#5c7088"/></svg><span style="padding-left:5px">Session list</span><svg class="ms-auto" width="16" height="12"><circle cx="5" cy="6" r="3" fill="none" stroke="#7c8c9c" stroke-width="2" /><circle cx="5" cy="6" r="4.500" fill="none" stroke="#7c8c9c" stroke-width="1.500" stroke-dasharray="2 1.500"/><path d="M11 5H16L13.500 8Z" fill="#7c8c9c"/></svg></div>
        <div class="d-flex align-items-center" style="padding:16px 0 0 7px;font-size:10px">
          <svg width="18" height="18"><rect x=".5" y=".5" width="17" height="17" fill="#dfe6ec" stroke="#8798a8"/><path d="M9 3Q13 3 12 8L11 11 16 14V17H2V14L7 11 6 8Q5 3 9 3Z" fill="#93a5b5"/></svg>
          <span class="text-nowrap" style="width:148px;margin-left:4px">DESKTOP-OE0QDVI (1 817 937</span>
          <svg style="margin-left:9px" width="10" height="7"><path d="M0 0H10L5 7Z" fill="#444"/></svg>
          <svg style="margin-left:10px" width="12" height="13"><path d="M0 0 12 4 8 6 12 11 10 13 5 8 3 12Z" fill="#4a9cf0"/></svg>
        </div>
      </div>
      <div class="tv-foot d-flex align-items-center justify-content-end" style="padding:0 9px 4px 0"><a href="#" class="text-white">www.teamviewer.com</a></div>
    </aside>
  </section>

  <svg class="pointer" width="12" height="19"><path d="M.5.5V15L4 12 6.500 18 9 17 6.500 11H11Z" fill="#fff" stroke="#000"/></svg>
</main>

<footer class="bar-out d-flex align-items-stretch">
  <button type="button" class="bare" style="width:66px" aria-label="Start"><svg width="44" height="44"><use href="#i-orb" width="44" height="44"/></svg></button>
  <button type="button" class="bare" style="width:76px" aria-label="Internet Explorer"><svg width="38" height="40" viewBox="0 0 38 40"><path d="M36 24H15Q15 30 21 30 25 30 27 27H36Q32 37 20 37 6 36 6 21 7 6 21 6 36 7 36 24ZM15 18H27Q27 12 21 12 15 12 15 18Z" fill="#58c4f4" fill-rule="evenodd" stroke="#1c88d0" stroke-width=".8"/><path d="M37 11Q38 1 27 4 12 9 5 24-1 37 4 38 8 39 13 35 5 37 6 29 12 12 26 5 36 3 35 11Z" fill="#f6c828"/></svg></button>
  <button type="button" class="tile" aria-label="Explorer"><svg width="42" height="40"><use href="#i-explorer" width="42" height="40"/></svg></button>
  <button type="button" class="bare" style="width:68px" aria-label="Media Player"><svg width="34" height="34" viewBox="0 0 34 34"><path d="M6 1H33V31L28 33H6Z" fill="#5aa4d4"/><path d="M1 1H27V32H1Z" fill="#9ccbe8" stroke="#d4ecf8"/><circle cx="14" cy="16" r="11" fill="#f0702c"/><path d="M9 9 21 16 9 23Z" fill="#fff"/></svg></button>
  <button type="button" class="bare" style="width:75px" aria-label="Google Chrome"><svg width="40" height="40"><use href="#i-chrome" width="40" height="40"/></svg></button>
  <button type="button" class="tile lit" aria-label="Remote Desktop"><svg width="38" height="42"><use href="#i-monitor" width="38" height="42"/></svg></button>
  <div style="width:4px;border:solid #b8c6e4;border-width:1px 1px 1px 0;background:#5a74b0"></div>
  <div class="d-flex align-items-center ms-auto">
    <svg width="10" height="6"><path d="M0 6 5 0 10 6Z" fill="#fff"/></svg>
    <svg style="margin-left:19px" width="20" height="20"><path d="M1.500 1V19" stroke="#fff" stroke-width="2"/><path d="M3 2H10L11 5H17L15 11H3Z" fill="#fff"/><circle cx="13" cy="14" r="5.500" fill="#d82c20"/><path d="M10.500 11.500 15.500 16.500M15.500 11.500 10.500 16.500" stroke="#fff" stroke-width="1.700"/></svg>
    <svg style="margin-left:10px" width="20" height="20"><path d="M4 1H7V3H9.500V18.500H1.500V3H4Z" fill="#5c7090" stroke="#fff" stroke-width="2"/><path d="M13 1V5M17 1V5" stroke="#fff" stroke-width="1.500"/><path d="M11.500 5H18.500V9L16 11V19H14V11L11.500 9Z" fill="#fff"/></svg>
    <svg style="margin-left:10px" width="20" height="20"><path d="M7 3.500H19V15.500H5" fill="#4a6a90" stroke="#fff" stroke-width="1.500"/><path d="M1.500 1.500H5.500V6.500H1.500ZM3.500 7V16" fill="#889" stroke="#fff" stroke-width="1.500"/><path d="M9 19 14 9 19 19Z" fill="#f8cc20" stroke="#8a7010" stroke-width=".7"/><path d="M14 12V16M14 17V18" stroke="#000" stroke-width="1.500"/></svg>
    <svg style="margin-left:10px" width="20" height="20"><path d="M1 6H4L9 1V18L4 13H1Z" fill="#fff"/><circle cx="13" cy="13.500" r="5.500" fill="#d82c20"/><circle cx="13" cy="13.500" r="3.200" fill="none" stroke="#fff" stroke-width="1.500"/><path d="M11 11.500 15 15.500" stroke="#fff" stroke-width="1.500"/></svg>
    <div class="clock-out" style="width:109px">02:40<br>02/09/2023</div>
    <div class="peek align-self-stretch"></div>
  </div>
</footer>

<script>
/* repeatable noise helpers */
function rng(seed) { return function () { seed = (seed * 1664525 + 1013904223) >>> 0; return seed / 4294967296; }; }
function hash(x, y, s) { let h = Math.imul(x, 374761393) + Math.imul(y, 668265263) + Math.imul(s, 974634777); h = Math.imul(h ^ (h >>> 13), 1274126177); return ((h ^ (h >>> 16)) >>> 0) / 4294967296; }
function vnoise(x, y, s) {
  const xi = Math.floor(x), yi = Math.floor(y); let fx = x - xi, fy = y - yi;
  fx = fx * fx * (3 - 2 * fx); fy = fy * fy * (3 - 2 * fy);
  const a = hash(xi, yi, s), b = hash(xi + 1, yi, s), c = hash(xi, yi + 1, s), d = hash(xi + 1, yi + 1, s);
  return a + (b - a) * fx + (c - a) * fy + (a - b - c + d) * fx * fy;
}
function fbm(x, y, s) { return vnoise(x, y, s) * .5 + vnoise(x * 2, y * 2, s + 1) * .3 + vnoise(x * 4, y * 4, s + 2) * .2; }
function interp(stops, t) {
  for (let i = 1; i < stops.length; i++) if (t <= stops[i][0]) {
    const p = stops[i - 1], q = stops[i], k = Math.max(0, (t - p[0]) / (q[0] - p[0]));
    return p.slice(1).map((v, j) => v + (q[j + 1] - v) * k);
  }
  return stops[stops.length - 1].slice(1);
}
const palette = [[0,216,216,216],[.13,50,50,255],[.475,0,240,0],[.585,255,255,50],[.66,255,210,0],[.7,255,190,0],[.78,255,0,0],[1,160,0,160]];
function gauss(u, v, b) { const x = (u - b[0]) / b[2], y = (v - b[1]) / b[3]; return b[4] * Math.exp(-x * x - y * y); }
/* closeness to a polyline, 1 on the line */
function ridge(u, v, pts, w) {
  let best = 1e9;
  for (let i = 1; i < pts.length; i++) {
    const ax = pts[i-1][0], ay = pts[i-1][1], dx = pts[i][0] - ax, dy = pts[i][1] - ay;
    const t = Math.max(0, Math.min(1, ((u - ax) * dx + (v - ay) * dy) / (dx * dx + dy * dy)));
    const d = Math.hypot(u - ax - t * dx, v - ay - t * dy); if (d < best) best = d;
  }
  return Math.exp(-(best * best) / (w * w));
}
function paint(id, fn) {
  const c = document.getElementById(id), g = c.getContext('2d'), W = c.width, H = c.height, im = g.createImageData(W, H);
  for (let y = 0; y < H; y++) for (let x = 0; x < W; x++) {
    const r = fn(x * 1100 / W, y * 798 / H, x, y), col = typeof r === 'number' ? interp(palette, r) : r, k = (y * W + x) * 4;
    im.data[k] = col[0]; im.data[k + 1] = col[1]; im.data[k + 2] = col[2]; im.data[k + 3] = 255;
  }
  g.putImageData(im, 0, 0);
}

/* backscatter, time across and range up */
const profile = [[0,.54],[130,.535],[200,.512],[300,.492],[450,.495],[500,.52],[540,.555],[590,.585],[630,.61],[650,.66],[675,.69],[700,.73],[725,.77],[775,.785],[790,.765],[798,.75]];
const streaks = [
  [[[90,160],[160,180],[175,260],[220,310],[260,335]],20,.06],[[[180,165],[240,170],[370,178]],14,.12],
  [[[0,300],[60,350],[150,380],[200,408],[280,418]],30,.065],[[[0,412],[40,428]],9,.07],[[[90,160],[90,230]],50,.04],
  [[[385,210],[400,260],[450,300],[530,340]],24,.06],[[[530,340],[600,350],[640,390],[720,398],[800,408]],15,.05],[[[470,205],[420,225]],14,.04],
  [[[690,190],[740,270],[800,340],[860,400],[895,420]],15,.055],[[[640,200],[800,170],[1100,170]],40,.08],[[[1085,190],[1098,260]],12,.08],[[[740,200],[820,290]],30,.035]];
const blobsB = [[940,205,90,28,.09],[1040,170,60,30,.06],[60,200,200,160,.03],[60,330,70,80,.04],[720,410,120,30,.02],[330,5,13,14,.36],[394,12,20,18,.36],[380,55,60,40,.12],[290,30,40,30,.12],[525,45,18,30,.22],[470,50,60,30,.12],[535,110,40,40,.12],[250,50,14,20,.12],[150,60,20,14,.1],[690,60,18,24,.12],[690,130,20,24,.1],[635,110,14,30,.1],[920,40,22,26,.1],[1020,45,14,30,.1],[1070,90,24,34,.12],[905,130,14,20,.1],[992,160,5,10,.18],[1020,168,5,8,.18],[310,90,12,24,.1],[585,120,20,40,.08]];
paint('mapB', (u, v, x, y) => {
  if (y > 263) return hash(x, y, 3) < .3 ? [30,60,20] : [120,150,0];
  const wob = (fbm(u / 70, v / 60, 5) - .5) * 34, edge = (fbm(u / 16, v / 12, 71) - .5) * 26;
  let t = interp(profile, v + (v > 450 ? wob * .7 : 0))[0];
  if (v > 570) t += (u / 1100 - .5) * .014;
  const top = Math.max(0, Math.min(1, (250 - v) / 110));
  t += (fbm(u / 28, v / 26, 9) - .45) * .13 * top;
  if (v < 620) t += (fbm(u / 90, v / 60, 13) - .5) * .03;
  if (v < 470) {
    let a = 0; const k = .35 + 1.1 * fbm(u / 16, v / 16, 21);
    for (const s of streaks) a = Math.max(a, s[2] * ridge(u + wob * .6 + edge * .5, v + wob * .5 + edge, s[0], s[1]));
    let b2 = 0; for (const b of blobsB) b2 = Math.max(b2, gauss(u + wob * .4 + edge, v + wob + edge, b));
    t += Math.max(a, b2) * k + Math.min(a, b2) * .4;
    const e = Math.pow((u - 738) / 36, 2) + Math.pow((v - 191 + (u - 738) * .12 + Math.abs(u - 745) * -.15) / 13, 2);
    if (e < .42) return [24,0,20]; if (e < 1) return .98 - (e - .42) * .25;
    t += Math.max(0, 1.6 - e) * .05;
  }
  t += (hash(x, y, 31) - .5) * (v < 170 ? .075 : v < 430 ? .042 : v < 560 ? .02 : .008) + (hash(x, 0, 33) - .5) * (v < 600 ? .012 : .008);
  const dens = (v < 130 ? .5 * fbm(u / 50, v / 40, 41) * (1 - v / 190) : v < 330 && u > 230 ? .025 : .005) * (t > .6 ? .15 : 1) * (v > 420 ? 0 : 1);
  if (hash(x, y, 43) < dens * (u < 230 || (u > 640 && u < 900) || v < 30 ? 1 : .55)) return [0,20,0];
  return Math.min(.97, t);
});

/* doppler velocity */
const noisy = [[60,50,130,100,.95],[140,90,70,60,.8],[40,200,40,30,.55],[660,20,120,44,.95],[830,60,120,90,.98],[1040,60,80,80,.7],[330,230,80,60,.45],[560,180,110,70,.42],[480,100,40,50,.5],[720,130,60,50,.5],[960,280,150,60,.35],[420,6,260,16,.7],[520,240,160,90,.28],[1080,130,30,50,.7],[480,10,50,30,.8],[210,130,120,30,.5]];
const reds = [[270,170,50,25,.08],[320,230,90,80,.07],[480,320,220,90,.07],[540,360,60,30,.06],[480,470,70,50,.06],[800,460,70,50,.07],[680,120,50,90,.13],[400,80,60,40,.1],[850,180,50,30,.09],[930,290,120,80,.07],[1020,70,60,40,.1],[930,40,30,40,.1],[590,540,50,30,.05],[180,550,30,20,.04],[240,770,22,14,.15],[790,740,26,26,.15],[130,680,14,10,.12],[860,575,25,18,.05],[860,500,40,40,.06],[580,260,120,100,.05],[30,210,40,30,.07],[620,610,20,20,.05],[430,610,20,30,.04]];
const cools = [[20,415,50,14,-.18],[60,360,130,70,-.08],[150,400,170,34,-.07],[0,560,40,160,-.07],[60,330,90,160,-.06],[230,415,110,16,-.05],[1080,720,80,60,-.07],[1000,660,40,40,-.05],[1090,230,20,60,-.08],[180,250,70,90,-.03],[620,390,60,20,-.04],[690,50,40,20,-.02],[520,20,20,20,-.12],[540,100,20,30,-.1],[210,70,50,20,-.09]];
const vStreaks = [[[[720,200],[735,290],[800,340],[860,400],[895,420]],18,-.1],[[[680,400],[800,400],[900,410]],24,-.05],[[[440,260],[520,310],[600,370]],24,-.05],[[[250,160],[100,170],[90,240]],34,-.03],[[[760,150],[830,250]],16,-.04],[[[880,190],[1100,190]],40,-.03],[[[300,30],[240,110],[330,170]],30,-.08],[[[60,200],[140,260],[260,340]],34,-.05]];
paint('mapD', (u, v, x, y) => {
  if (y > 263) return hash(x >> 1, y >> 2, 3) < .55 ? [20,40,0] : [255,250,180];
  const wob = (fbm(u / 60, v / 50, 105) - .5) * 60, edge = (fbm(u / 18, v / 26, 171) - .5) * 30;
  let t = .675 + (fbm(u / 60, v / 50, 107) - .5) * .07;
  let r = 0; for (const b of reds) r += gauss(u + wob * .5 + edge, v + wob + edge, b); t += Math.min(.15, r);
  for (const b of cools) t += gauss(u, v + wob * .4 + edge * .3, b);
  for (const s of vStreaks) t += s[2] * ridge(u + edge * .4, v + wob * .2 + edge * .4, s[0], s[1]);
  t += (fbm(u / 12, v / 34, 111) - .5) * .07;
  if (v < 560) {
    const q = Math.min(1, (560 - v) / 100) * Math.min(1, Math.max(.15, (u - 30) / 220));
    t += ((hash(x, 0, 121) - .5) * .09 + (hash(x, Math.floor((y + hash(x, 1, 5) * 5) / 5), 123) - .42) * .14 * (v < 420 ? 1 : .55)) * q;
    if (v < 420) t += (hash(x, y >> 1, 125) - .5) * .09 * q;
  }
  if (v > 640) { const k = Math.min(1, (v - 640) / 110); t += (fbm(u / 12, v / 20, 131) - .56) * .5 * k - .02 * k; if (u > 1000) t -= .03 * k; }
  t += (hash(x, y, 135) - .5) * (v < 330 ? .05 : .012);
  if (v < 400) {
    let d = .02; for (const b of noisy) d = Math.max(d, gauss(u + wob, v + wob * .5 + edge, b));
    d *= .5 + 1.1 * vnoise(u / 9, v / 30, 141);
    if (v > 145) d *= .85;
    if (hash(x, y >> 1, 143) < d) {
      const c = hash(x, y >> 1, 147);
      return c < .56 ? [244,20,244] : c < .68 ? .95 : c < .76 ? [20,20,30] : c < .83 ? [130,130,140] : c < .88 ? [60,130,110] : c < .95 ? [255,220,40] : .5;
    }
  }
  return Math.max(.42, Math.min(.9, t));
});

/* line plots */
function grid(w, h, px, py, oy) {
  let s = '<g shape-rendering="crispEdges">';
  for (let x = px / 10; x < w; x += px / 10) s += `<path d="M${x.toFixed(1)} 0V${h}" stroke="#052f08"/>`;
  for (let y = oy + py / 5; y < h; y += py / 5) s += `<path d="M0 ${y.toFixed(1)}H${w}" stroke="#052f08"/>`;
  for (let x = px; x < w; x += px) s += `<path d="M${x.toFixed(1)} 0V${h}" stroke="#0a6210"/>`;
  for (let y = oy + py; y < h - 1; y += py) s += `<path d="M0 ${y.toFixed(1)}H${w}" stroke="#0a6210"/>`;
  return s + '</g>';
}
(function () {
  const r = rng(7), base = [[26,0],[28,20],[30,34],[32,40],[35,50],[38,56],[41,66],[44,74],[48,81],[54,85],[60,88],[66,94],[82,94],[88,84],[92,80],[97,85],[101,94],[112,93],[117,88],[121,94],[150,95],[313,95]];
  let d = 'M1 0V96M26 0';
  for (let x = 26; x <= 312; x += .6) { const y = interp(base, x)[0], a = x < 40 ? 2 : 8; d += `L${x.toFixed(1)} ${(y + (r() - .5) * a).toFixed(1)}`; }
  document.getElementById('ascope').innerHTML = grid(313, 104, 52.1, 24.6, 0) + `<path d="${d}" fill="none" stroke="#fff" stroke-width="1.200"/><path d="M277 0V104" stroke="#f0e040" stroke-width="1.200"/>`;
})();
(function () {
  const r = rng(11), base = [[0,64],[1,94],[2,52],[4,38],[6,38],[9,49],[12,48],[14,41],[20,43],[23,48],[26,42],[30,40],[54,40],[60,46],[66,54],[80,54],[92,46],[99,44],[102,62],[112,62],[116,34],[118,40],[119,62],[140,66],[309,66]];
  let d = 'M0 64';
  for (let x = 1; x <= 308; x += .5) { const y = interp(base, x)[0], a = x < 55 ? 3 : x < 62 ? 8 : x < 82 ? 18 : x < 100 ? 6 : x < 118 ? 20 : (r() < .12 ? 44 : 22); d += `L${x.toFixed(1)} ${(y + (r() - .5) * a).toFixed(1)}`; }
  const up = [592,597,612,647,658,662,666,687,700,716,720,771,788,793,797,823,829,850,871,882,905,937,950,996,1030,1036,1047,1050,1084,1090,1108,1113,1127,1132,1168,1180,1198,1212];
  const dn = [597,602,612,690,697,710,770,785,808,850,873,890,908,912,975,1003,1030,1043,1083,1087,1090,1105,1127,1168,1198];
  const bars = up.map(u => `M${Math.round((u - 290) / 3)}.5 0V66`).join('') + dn.map(u => `M${Math.round((u - 290) / 3)}.5 60V104`).join('');
  document.getElementById('velo').innerHTML = grid(309, 104, 51.4, 25.8, 0) + `<path d="${d}" fill="none" stroke="#fff" stroke-width="1.200"/><path d="${bars}" stroke="#fff" stroke-width="1.300" shape-rendering="crispEdges"/>`;
})();
</script>
</body>
</html>
